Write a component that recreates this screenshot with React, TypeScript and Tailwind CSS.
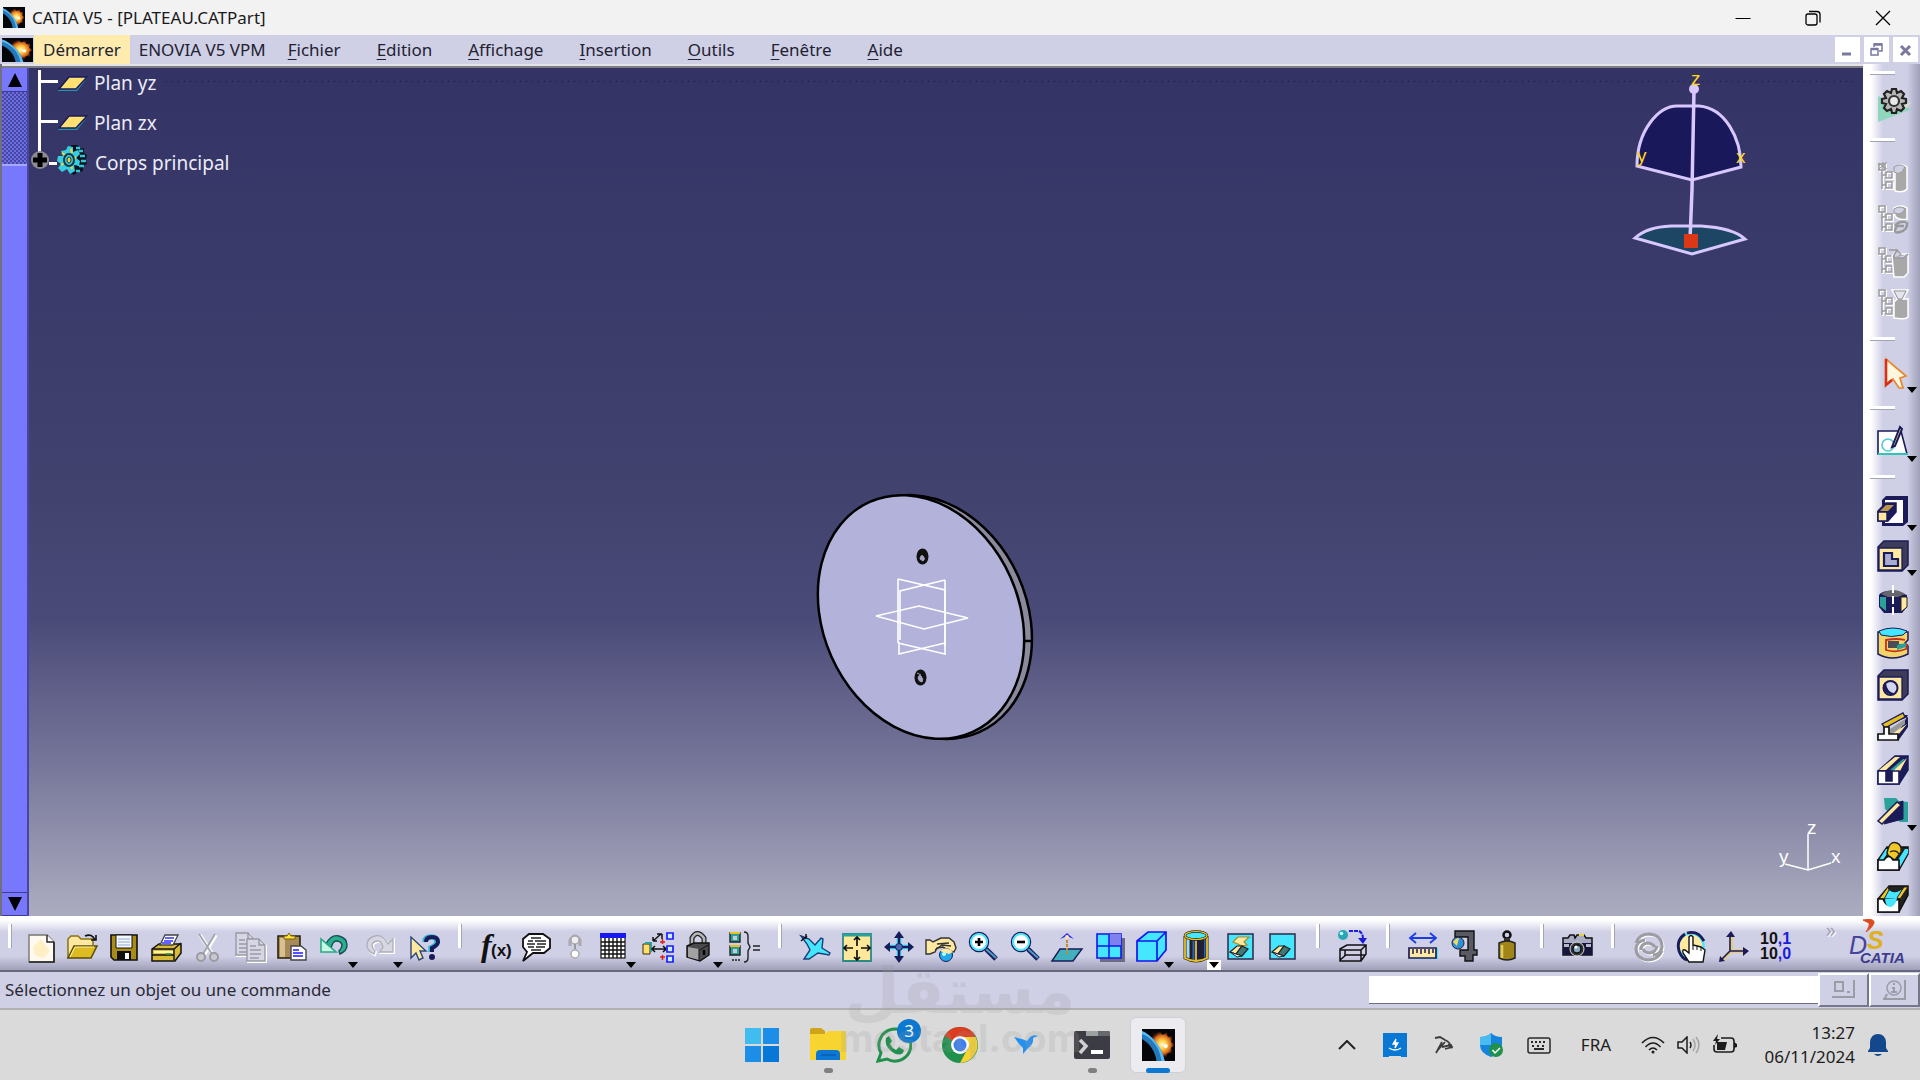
import React from 'react';

interface Tool {
  name: string;
  icon: React.ReactNode;
  menu?: boolean;
  active?: boolean;
  narrow?: boolean;
  disabled?: boolean;
}

const NAVY = '#1b1b5a';
const CREAM = '#ffe9a0';
const CYAN = '#45e6ff';
const TEAL = '#2aa19a';

/* Shared pieces */

function Icon({ children, className = 'w-8 h-8' }: { children: React.ReactNode; className?: string }) {
  return (
    <svg viewBox="0 0 32 32" className={`${className} shrink-0 overflow-visible`} fill="none" aria-hidden="true">
      {children}
    </svg>
  );
}

function Earth({ className, id }: { className: string; id: string }) {
  return (
    <svg viewBox="0 0 32 32" preserveAspectRatio="none" className={className} aria-hidden="true">
      <defs>
        <radialGradient id={id}>
          <stop offset="0" stopColor="#fffbd0" />
          <stop offset="0.35" stopColor="#ffc940" />
          <stop offset="0.7" stopColor="#d5641c" />
          <stop offset="1" stopColor="#5a1408" stopOpacity="0.2" />
        </radialGradient>
      </defs>
      <rect width="32" height="32" fill="#05060a" />
      <path d="M17 2l3 4 4-3 1 5 5-1-2 6 4 3-4 3 2 6-5-1-2 5-4-3-4-4-5-8-3-5 3-2-1-4 4 1z" fill={`url(#${id})`} />
      <path d="M0 2C9 6 19 17 22 32h-8C13 22 7 14 0 10z" fill="#2478bc" />
      <path d="M0 2C9 6 19 17 22 32h-3C17 18 9 8 0 5z" fill="#58bcf4" />
      <circle cx="23" cy="17" r="2" fill="#fff" />
    </svg>
  );
}

const treeBase = (
  <g>
    <path d="M2 2h6v6H2zM5 8v19M5 13h4M5 23h4M9 10h6v6H9zM9 20h6v6H9z" stroke="#fff" strokeWidth="2" transform="translate(1 1)" />
    <path d="M2 2h6v6H2zM5 8v19M5 13h4M5 23h4M9 10h6v6H9zM9 20h6v6H9z" stroke="#9a9a9a" strokeWidth="1.5" />
  </g>
);

const sheet = (x: number, y: number) => (
  <g>
    <path d={`M${x} ${y}h12l6 6v16h-18z`} stroke="#fff" strokeWidth="2" transform="translate(1 1)" />
    <path d={`M${x} ${y}h12l6 6v16h-18zM${x + 12} ${y}v6h6M${x + 3} ${y + 7}h6M${x + 3} ${y + 11}h11M${x + 3} ${y + 15}h11M${x + 3} ${y + 19}h9`} stroke="#9a9aa2" strokeWidth="1.4" fill="#d6d6e6" />
  </g>
);

const blockView = (hidden: boolean) => (
  <g>
    <rect x="3" y="4" width="25" height="25" fill={CYAN} stroke="#333352" strokeWidth="1.6" />
    {hidden && <path d="M8 12l5-5h11l-5 5 3 3-5 1-4-2z" fill={CREAM} stroke="#a88a20" strokeWidth="1.2" />}
    <path d="M5 22l7-6h5l-6 8z" fill={CREAM} stroke="#222" strokeWidth="1.2" />
    <path d="M11 24l6-8 6 3-6 7z" fill="#407a78" stroke="#222" strokeWidth="1.2" />
    <path d="M5 22l6 2 6 2-5 1z" fill="#fff" stroke="#222" />
  </g>
);

const magnifier = (plus: boolean) => (
  <g>
    <path d="M19 19l10 10" stroke={NAVY} strokeWidth="5" />
    <path d="M19 19l10 9" stroke="#4a9fc8" strokeWidth="2" />
    <circle cx="12" cy="12" r="9.5" fill="#fff" stroke={NAVY} strokeWidth="1.5" />
    <circle cx="12" cy="12" r="8" stroke={CYAN} strokeWidth="2" />
    <path d={plus ? 'M8 12h8M12 8v8' : 'M8 12h8'} stroke="#000" strokeWidth="2.6" />
  </g>
);

/* Bottom toolbar */

const standardTools: Tool[] = [
  { name: 'Nouveau', icon: <><path d="M4 5h18l7 7v20H4z" fill="#fffaf0" stroke="#77776f" strokeWidth="1.4" /><path d="M22 5v7h7" fill="#fff" stroke="#222" strokeWidth="1.4" /><path d="M29 12v20H4" stroke="#222" strokeWidth="1.6" /><path d="M8 17l4-4 4-4 4 6 5 6-7 7-8-3z" fill="#ffefc4" /></> },
  { name: 'Ouvrir', icon: <><path d="M1 28V9l3-3h7l3 3h12v6" fill={CREAM} stroke="#8a7210" strokeWidth="1.5" /><path d="M1 28l6-12h23l-6 12z" fill="#dcbc22" stroke="#5a4a08" strokeWidth="1.5" /><path d="M3 27l5-10h19" stroke="#fff0a0" /><path d="M18 6q7-3 10 4M29 5v5h-5" stroke="#111" strokeWidth="1.6" /></> },
  { name: 'Enregistrer', icon: <><path d="M2 5h26v25H5l-3-3z" fill="#a98c17" stroke="#111" strokeWidth="1.6" /><path d="M7 5h16v13H7z" fill="#f4f8ff" stroke="#111" /><path d="M9 9h12M9 12h12M9 15h12" stroke="#8fa8d8" /><path d="M8 21h14v9H8z" fill="#111" /><path d="M16 23h4v6h-4z" fill="#fff" /></> },
  { name: 'Imprimer', icon: <><path d="M1 19l7-5h22v9l-6 8H1z" fill="#d8bc38" stroke="#111" strokeWidth="1.5" /><path d="M1 19h22l7-6M1 25h22v5M23 19v7" stroke="#111" strokeWidth="1.4" /><path d="M3 21h19v2H3z" fill="#fff4c0" /><path d="M9 15l5-10h13l-5 10z" fill="#fff" stroke="#444" strokeWidth="1.3" /><path d="M14 8h9M13 11h9M11 13h9" stroke="#3030ff" strokeWidth="1.3" /><path d="M15 24h5" stroke="#2c9a3a" strokeWidth="1.6" /></> },
  { name: 'Couper', disabled: true, icon: <><path d="M6 4l13 20M22 4L10 24" stroke="#fff" strokeWidth="3.5" transform="translate(1 1)" /><path d="M6 4l13 20M22 4L10 24" stroke="#a3a3ab" strokeWidth="1.8" /><circle cx="8" cy="27" r="4" fill="#c9c9d2" stroke="#9a9aa0" strokeWidth="2" /><circle cx="21" cy="27" r="4" fill="#c9c9d2" stroke="#9a9aa0" strokeWidth="2" /></> },
  { name: 'Copier', disabled: true, icon: <>{sheet(1, 3)}{sheet(12, 9)}</> },
  { name: 'Coller', icon: <><path d="M1 6h22v22H1z" fill="#a88a58" stroke="#2a2208" strokeWidth="1.6" /><path d="M3 8h5v19H3z" fill="#d8c090" /><path d="M7 9V6h3l2-3 2 3h4v3z" fill="#ffe33a" stroke="#7a6208" /><path d="M14 16h10l5 4v10H14z" fill="#fff" stroke="#444" strokeWidth="1.4" /><path d="M16 20h6M16 23h10M16 26h10" stroke="#1c1cff" strokeWidth="1.6" /></> },
  { name: 'Annuler', menu: true, icon: <><path d="M7 14Q12 4 20 6q8 2 8 9 0 6-7 9l-1-3q3-3 3-6-1-4-6-4-3 0-5 7z" fill="#28b08c" stroke="#1a4a58" strokeWidth="1.4" /><path d="M2 9v13h15z" fill="#c8f8e4" stroke="#28a888" strokeWidth="1.6" /></> },
  { name: 'Rétablir', menu: true, disabled: true, icon: <><path d="M24 14Q19 4 11 6q-8 2-8 9 0 6 7 9l1-3q-3-3-3-6 1-4 6-4 3 0 5 6l-3 5h13V9z" fill="#d6d6e4" stroke="#fff" strokeWidth="2" transform="translate(1 1)" /><path d="M24 14Q19 4 11 6q-8 2-8 9 0 6 7 9l1-3q-3-3-3-6 1-4 6-4 3 0 5 6l-3 5h13V9z" fill="#d6d6e4" stroke="#aeaeb6" strokeWidth="1.3" /></> },
  { name: "Qu'est-ce que c'est ?", icon: <><path d="M2 7v21l5-5 3 7 4-2-3-7h6z" fill={CREAM} stroke="#28487c" strokeWidth="1.4" /><path d="M17 12q0-5 6-5t6 5q0 3-6 6v4" stroke="#2fb7d4" strokeWidth="5.5" transform="translate(-1 0)" /><path d="M17 12q0-5 6-5t6 5q0 3-6 6v4" stroke={NAVY} strokeWidth="4" /><circle cx="23" cy="27" r="3" fill={NAVY} /></> },
];

const knowledgeTools: Tool[] = [
  { name: 'Formule', icon: <g fill="#111"><text x="2" y="26" fontFamily="Liberation Serif, serif" fontStyle="italic" fontWeight="bold" fontSize="32">f</text><text x="12" y="26" fontFamily="Liberation Sans, sans-serif" fontWeight="bold" fontSize="17">(x)</text></g> },
  { name: 'Commentaire', icon: <><path d="M8 4h14l7 5v9l-6 5H12L2 31l4-9-4-5V9z" fill="#fff" stroke="#111" strokeWidth="1.8" /><path d="M10 8h10M7 11h5M14 11h11M6 14h8M16 14h9M7 17h6M15 17h9M10 20h10" stroke="#222" strokeWidth="1.3" /></> },
  { name: 'Lien', narrow: true, disabled: true, icon: <><path d="M11 16V10q5-8 10 0v6" stroke="#a8a8b2" strokeWidth="3" /><circle cx="16" cy="10" r="4" fill="#eee" stroke="#aaa" strokeWidth="1.5" /><path d="M16 14v5" stroke="#999" strokeWidth="2" /><circle cx="16" cy="24" r="4" fill="#fff" stroke="#aaa" strokeWidth="1.5" /></> },
  { name: 'Table de paramétrage', menu: true, icon: <><rect x="4" y="4" width="24" height="24" fill="#fff" stroke="#111" strokeWidth="1.2" /><path d="M4 12h24M4 16h24M4 20h24M4 24h24M8 8v20M12 8v20M16 8v20M20 8v20M24 8v20" stroke="#111" strokeWidth="1.4" /><path d="M3 3h26v5H3z" fill="#1818f0" /></> },
  { name: 'Relations', icon: <><path d="M1 14h7v10H1z" fill="#ffdf6a" stroke="#3a2c08" /><path d="M3 13h6v9" stroke={TEAL} strokeWidth="2" /><path d="M11 19h12M11 11l8-7M20 4h-5M20 4v5M11 11V7M11 11h4M13 16l-3 3 3 3M21 16l3 3-3 3" stroke="#111" strokeWidth="1.5" /><path d="M25 3h6v6h-6zM25 16h6v6h-6zM25 26h6v6h-6z" fill="#c9f0ff" stroke="#1c1cff" strokeWidth="1.7" /><path d="M18 12h5M20.5 9v5M18 27h5M20.5 25v5" stroke="#e02020" strokeWidth="1.5" /></> },
  { name: 'Verrouiller', menu: true, icon: <><path d="M8 15V8q5-9 12 0v8" stroke="#222" strokeWidth="5" /><path d="M8 15V8q5-9 12 0v8" stroke="#b8b8b8" strokeWidth="2.5" /><path d="M3 16l7-3h15v12l-9 6-13-4z" fill="#4a4a4c" stroke="#111" strokeWidth="1.4" /><path d="M4 17l11 2v11L4 27z" fill="#a2a2a2" /><path d="M15 19v11M16 20l8-5" stroke="#111" /><path d="M20 20v5" stroke="#000" strokeWidth="2.5" /></> },
  { name: 'Équivalences', icon: <><path d="M1 3h10v9H1zM1 16h10v9H1z" fill={TEAL} stroke="#222" strokeWidth="1.4" /><path d="M1 3h10M1 16h10" stroke="#e8c020" strokeWidth="2" /><path d="M4 6h4v4H4zM4 19h4v4H4z" fill="#c8c8d8" /><path d="M3 30h2M6 30h2M9 30h2" stroke="#222" strokeWidth="1.5" /><path d="M15 2q4 0 4 4v7l2 4-2 4v7q0 4-4 4" stroke="#222" strokeWidth="1.4" /><path d="M24 16h7M24 20h7" stroke="#222" strokeWidth="1.6" /></> },
];

const viewTools: Tool[] = [
  { name: 'Mode vol', icon: <><path d="M2 6l8 3 6 6 6-7 2 1-1 9 8 5-1 2-11-2-9 6H5l6-9-3-6z" fill={CYAN} stroke="#1c3c78" strokeWidth="1.4" /><path d="M2 11l6-5M7 4v5" stroke="#111" strokeWidth="1.5" /></> },
  { name: 'Centrer tout', icon: <><path d="M2 4h28v27H2z" fill="#ffe89a" stroke="#2a8a86" strokeWidth="1.8" /><path d="M2 5h28" stroke={TEAL} strokeWidth="3" /><path d="M16 8v8M16 20v9M4 18h8M20 18h8M13 10l3-3 3 3M13 27l3 3 3-3M6 15l-3 3 3 3M26 15l3 3-3 3" stroke="#111" strokeWidth="1.7" /></> },
  { name: 'Translater', icon: <><path d="M16 4v26M3 17h26" stroke={CYAN} strokeWidth="5" /><path d="M16 4v26M3 17h26" stroke={NAVY} strokeWidth="2.5" /><path d="M11 8l5-7 5 7zM11 26l5 7 5-7zM7 12l-6 5 6 5zM25 12l6 5-6 5z" fill={NAVY} /><circle cx="16" cy="17" r="3.5" fill="#4868b0" stroke={NAVY} /></> },
  { name: 'Rotation', icon: <><path d="M1 10h4l3 2 8-4h8l5 4 2 6-2 4-4-1-7-4-6 1-2 4-5 2H1z" fill={CREAM} stroke="#333" strokeWidth="1.4" /><path d="M12 14l12-1M10 20l7-5 9 1" stroke="#333" strokeWidth="1.3" /><circle cx="21" cy="25" r="6.5" fill="#22a8e8" stroke={NAVY} /><path d="M15 21q6-6 13 1l-4 2z" fill={CREAM} /><circle cx="19" cy="24" r="2" fill="#bff" /></> },
  { name: 'Zoom avant', icon: magnifier(true) },
  { name: 'Zoom arrière', icon: magnifier(false) },
  { name: 'Vue normale', icon: <><path d="M1 31l8-12h22l-9 12z" fill="#3fb0bc" stroke={NAVY} strokeWidth="1.4" /><path d="M16 6v18" stroke="#c88a30" strokeWidth="2" strokeDasharray="3 1" /><path d="M9 9l7-6 7 6-5-2h-4z" fill="#2a2aff" /><circle cx="16" cy="7" r="2" fill={CREAM} /></> },
  { name: 'Multi-vues', icon: <><path d="M7 8h25v24H7z" fill="#6c6c84" /><path d="M4 4h24v24H4z" fill={CYAN} stroke="#1414f0" strokeWidth="1.6" /><path d="M16 4h12v12H16z" fill="#7d80ee" /><path d="M16 4v24M4 16h24" stroke="#1414f0" strokeWidth="1.5" /></> },
  { name: 'Vue isométrique', menu: true, icon: <path d="M2 11L13 2h18v18l-9 11H2zM2 11h20v20M22 11l9-9" fill={CYAN} stroke="#1414f0" strokeWidth="1.7" /> },
  { name: 'Ombrage avec arêtes', menu: true, active: true, icon: <><path d="M5 6v22q11 6 22 0V6z" fill="#2b60c8" /><path d="M5 6h6v23l-6-2z" fill="#9edcf4" /><path d="M17 9h7v20h-7z" fill={NAVY} /><path d="M5 6v22q11 6 22 0V6M16 8v22M11 9v20M22 9v20" stroke="#222" strokeWidth="3" /><path d="M5 6v22q11 6 22 0V6M12 9h8M16 8v22" stroke="#e8c020" strokeWidth="1.8" /><ellipse cx="16" cy="5.5" rx="11" ry="4" fill={CYAN} stroke="#222" strokeWidth="2.4" /><ellipse cx="16" cy="5.5" rx="11" ry="4" stroke="#e8c020" strokeWidth="1.2" /></> },
  { name: 'Cacher / Afficher', icon: blockView(true) },
  { name: "Permuter l'espace visible", icon: blockView(false) },
];

const materialTools: Tool[] = [
  { name: 'Appliquer un matériau', icon: <><circle cx="6" cy="5" r="5" fill="#29a6b4" /><circle cx="4.5" cy="3.5" r="1.8" fill="#bff" /><path d="M12 1h10q4 2 4 8" stroke="#1c1cdc" strokeWidth="2" strokeDasharray="4 1" /><path d="M21 8h9l-4 6z" fill="#1c1cdc" /><path d="M3 19l7-4h19v9l-5 7H3zM3 20h21v11M24 20l5-5M8 20v5h12M3 30l6-5h19" stroke="#111" strokeWidth="1.5" /></> },
];

const measureTools: Tool[] = [
  { name: 'Mesurer entre', icon: <><path d="M3 8h26M9 3L3 8l6 5M23 3l6 5-6 5" stroke="#1c3ce8" strokeWidth="1.8" /><path d="M3 18h28v11H3z" fill={CYAN} /><path d="M2 18h27v10H2z" fill={CREAM} stroke={NAVY} strokeWidth="1.7" /><path d="M6 19v5M10 19v4M14 19v5M18 19v4M22 19v5M26 19v4" stroke={NAVY} strokeWidth="1.5" /></> },
  { name: 'Mesurer un élément', icon: <><path d="M6 1h19v19h3v5h-4v6h-8v-5h-5v-6h8V7H6z" fill="#5a5a62" stroke="#111" strokeWidth="1.4" /><circle cx="9" cy="13" r="6" fill="#2a90d8" stroke="#223" /><path d="M4 12q3-4 6-4l-2 8z" fill="#f4d868" /></> },
  { name: "Mesurer l'inertie", icon: <><circle cx="16" cy="5" r="3.5" stroke="#111" strokeWidth="2.5" /><path d="M13 8h6v4h-6z" fill="#333" /><path d="M8 13q8-4 16 0v15q-8 4-16 0z" fill="#a08618" stroke="#222" strokeWidth="1.5" /><path d="M11 15v13" stroke="#e0cc60" strokeWidth="2.5" /></> },
];

const captureTools: Tool[] = [
  { name: 'Capture', icon: <><path d="M2 8h5l2-3h4l1 3 2-3h7l2 3h6v17H2z" fill="#a8acc4" stroke="#111" strokeWidth="1.5" /><path d="M2 13h29v12H2z" fill="#16163c" /><path d="M3 14h5v3H3zM25 14h5v3h-5z" fill="#b8b8c8" /><path d="M18 4h5v2h-5z" fill="#e8d040" /><circle cx="16" cy="19" r="7" fill="#333" stroke="#ddd" /><circle cx="16" cy="19" r="4" fill="#86a8c0" stroke="#111" strokeWidth="1.5" /><circle cx="15" cy="17" r="1.5" fill="#fff" /></> },
];

const swirl = 'M3 13Q6 4 16 4q13 1 13 13-1 8-9 8M29 21q-4 9-14 9Q3 29 3 18q1-7 9-8M8 20q0-6 6-7 5 0 8 4M24 16q-1 6-7 7-5 0-7-4';

const updateTools: Tool[] = [
  { name: 'Mise à jour', disabled: true, icon: <><path d={swirl} stroke="#fff" strokeWidth="3" transform="translate(1 1)" /><path d={swirl} stroke="#9c9ca2" strokeWidth="3" /></> },
  { name: 'Mise à jour manuelle', icon: <><circle cx="16" cy="16" r="12.5" fill={CREAM} stroke={CYAN} strokeWidth="2.5" /><path d="M10 4Q1 10 4 21q3 8 8 9M12 3q11-3 17 8" stroke={NAVY} strokeWidth="2.8" /><path d="M14 32l-6-9q-1-4 2-3l4 3V7q2-3 4 0v8l8 2 4 3-2 12z" fill="#fff" stroke="#111" strokeWidth="1.4" /><path d="M18 15v5M22 16v4M26 17v4" stroke="#111" /></> },
  { name: 'Système d’axes', icon: <><path d="M14 4v17l16 0M14 21L4 31" stroke="#e8cc70" strokeWidth="3.5" /><path d="M13 4v17h16M13 21L4 30" stroke={NAVY} strokeWidth="1.6" /><path d="M9 7l5-6 4 6zM26 17l6 4-6 5zM3 26l5 5-6 1z" fill={NAVY} /></> },
  { name: 'Dimensions moyennes', icon: <g fontFamily="Liberation Sans, sans-serif" fontWeight="bold" fontSize="16"><text x="1" y="14" fill="#111">10<tspan fill="#1c1cdc">,1</tspan></text><text x="1" y="29" fill="#111">10<tspan fill="#1c1cdc">,0</tspan></text></g> },
];

/* Side toolbar */

const workbenchTools: Tool[] = [
  { name: 'Part Design', icon: <><path d="M1 10v26l34-13z" fill="#8ed6bc" /><path d="M20 20l15-4-8 8z" fill="#d8d8d0" /><path d="M15 3h4l1 4 4-2 3 3-2 4 4 1v4l-4 1 2 4-3 3-4-2-1 4h-4l-1-4-4 2-3-3 2-4-4-1v-4l4-1-2-4 3-3 4 2z" fill="#b8b8b8" stroke="#222" strokeWidth="2.2" /><circle cx="17" cy="15" r="5" fill="#e8e8e8" stroke="#333" strokeWidth="2.2" /></> },
];

const treeTools: Tool[] = [
  { name: 'Insérer un corps', disabled: true, icon: <>{treeBase}<path d="M18 5q6-4 12 0v22q-3 4-12 2z" fill="#a8a8a8" stroke="#fff" strokeWidth="1.5" /><path d="M17 5q6-4 11 0l-3 5q-4 3-8 0z" fill="#cfcfe6" stroke="#999" /><path d="M6 0v7M1 1l9 6M10 0L2 7" stroke="#999" /></> },
  { name: 'Actualiser un corps', disabled: true, icon: <>{treeBase}<path d="M17 4q7-4 13 0v11q-8 2-12-3z" fill="#a8a8a8" stroke="#fff" strokeWidth="1.5" /><path d="M17 5q6-4 11 0l-3 4q-4 2-8 0z" fill="#cfcfe6" stroke="#999" /><path d="M18 22q3-5 11-4M30 18q1 8-7 10t-3-6h7" stroke="#999" strokeWidth="2.5" /></> },
  { name: 'Assembler', disabled: true, icon: <>{treeBase}<path d="M15 10l5-6 5 4h6v19l-4 4H17z" fill="#a8a8a8" stroke="#fff" strokeWidth="1.5" /><path d="M17 12h10l4-4M17 12v-3l3-5 4 4M12 4h9" fill="#cfcfe6" stroke="#999" strokeWidth="1.5" /></> },
  { name: 'Relimitation partielle', disabled: true, icon: <>{treeBase}<path d="M15 2h16l-5 9h5v18q-3 3-14 1V14l3-3z" fill="#a8a8a8" stroke="#fff" strokeWidth="1.5" /><path d="M17 3h12l-4 8h-4z" fill="#e4e4f0" stroke="#999" /></> },
];

const selectTools: Tool[] = [
  { name: 'Sélectionner', menu: true, icon: <><path d="M9 2v26l7-6 6 9h4l-3-10 6-2z" fill="#fff6e0" stroke="#e8862c" strokeWidth="1.7" /><path d="M9 2v26l6-5" stroke="#d83010" strokeWidth="2.6" /></> },
];

const sketchTools: Tool[] = [
  { name: 'Esquisse', menu: true, icon: <><path d="M1 5h23l6 23H1z" fill="#fff" stroke={NAVY} strokeWidth="1.6" /><path d="M1 28h30" stroke="#30c4b8" strokeWidth="2" /><circle cx="11" cy="19" r="6" stroke="#58c8d8" strokeWidth="1.7" /><path d="M15 21l8-20 2 2-7 17z" fill={CREAM} stroke={NAVY} strokeWidth="2" /></> },
];

const featureTools: Tool[] = [
  { name: 'Extrusion', menu: true, icon: <><path d="M5 5l4-4h22v26l-5 4H5z" fill={NAVY} /><path d="M8 5h18v23H8z" fill="#fff" /><path d="M1 16l8-8h10v9l-8 9H1z" fill={NAVY} stroke={NAVY} strokeWidth="1.5" /><path d="M3 16l6-6h8l-6 6z" fill="#b89848" /><path d="M1 17h9v9H1z" fill={CREAM} stroke={NAVY} strokeWidth="1.5" /></> },
  { name: 'Poche', menu: true, icon: <><path d="M1 7l6-6h24v24l-6 6H1z" fill="#3c3c58" stroke={NAVY} strokeWidth="1.5" /><path d="M2 8h23v22H2z" fill={CREAM} stroke={NAVY} strokeWidth="1.3" /><path d="M7 13h8v6h6v7H7z" fill="#a8acd0" stroke={NAVY} strokeWidth="2.2" /></> },
  { name: 'Révolution', icon: <><path d="M2 10q6-8 28 0v12l-5 6H7l-5-6z" fill={NAVY} /><path d="M4 9q12-8 24 0l-7 3H11z" fill="#66666e" /><path d="M3 12h6v14l-6-5z" fill={TEAL} /><path d="M24 12h6v10l-6 5z" fill={CREAM} stroke="#222" /><path d="M16 0v30" stroke="#fff" strokeWidth="2" strokeDasharray="8 3" /></> },
  { name: 'Gorge', icon: <><path d="M1 5v22q14 8 30 0v-8l-3-3 3-3V5z" fill="#f2d468" stroke={NAVY} strokeWidth="1.5" /><path d="M28 13q-8-2-19 0v10q10 3 20-1l1-4H20" stroke="#c43020" strokeWidth="1.8" /><path d="M11 14h11v7H11z" fill="#4c4c54" /><path d="M20 18l9-2v4l-9 3z" fill={TEAL} /><path d="M2 4q14-6 28 0l-4 4q-12 3-22 0z" fill={CYAN} stroke={NAVY} /></> },
  { name: 'Trou', icon: <><path d="M1 7l6-6h24v24l-6 6H1z" fill="#3c3c58" stroke={NAVY} strokeWidth="1.5" /><path d="M2 8h23v22H2z" fill={CREAM} stroke={NAVY} strokeWidth="1.3" /><circle cx="13.5" cy="19" r="7" fill="#d4d6f0" stroke={NAVY} strokeWidth="2" /><path d="M8 14q-3 9 8 11-7-2-8-11z" fill={NAVY} stroke={NAVY} strokeWidth="2" /></> },
  { name: 'Nervure', icon: <><path d="M6 16l18-12h7L21 22V30l10-14V6" fill={NAVY} /><path d="M5 13L26 2l2 4-20 11z" fill="#e4c020" stroke={NAVY} strokeWidth="1.3" /><path d="M10 20L28 8v5L14 24z" fill="#989898" /><path d="M14 24l16-11-9 11z" fill={CREAM} /><path d="M1 23h6v-7h5v7h9v6H1z" fill="#fff" stroke="#111" strokeWidth="1.7" /></> },
  { name: 'Rainure', icon: <><path d="M1 18L18 3h13v14L22 31H1z" fill={NAVY} stroke={NAVY} strokeWidth="1.5" /><path d="M2 17L18 4h5L9 17z" fill={CREAM} /><path d="M13 17L26 6h2L17 18z" fill={TEAL} /><path d="M16 18L30 5l-7 13z" fill={CREAM} /><path d="M1 18h8v10h6V18h7v13H1z" fill="#fff" stroke={NAVY} strokeWidth="1.6" /></> },
  { name: 'Raidisseur', menu: true, icon: <><path d="M7 3h12l3 3 9 1v20h-8L8 14z" fill={TEAL} /><path d="M20 8l6-2v18L7 29z" fill={NAVY} stroke={NAVY} /><path d="M1 26L20 7l4 3L5 29z" fill={CREAM} stroke={NAVY} strokeWidth="1.5" /></> },
  { name: 'Solide multi-sections', icon: <><path d="M1 20L10 7h21v7L22 30H1z" fill="#222" stroke="#111" strokeWidth="1.5" /><path d="M2 20L9 9h4L6 20zM21 20l7-11h3v4l-8 14z" fill={CYAN} /><path d="M11 9q2-8 9-6 5 2 4 9l-6 8q-7-3-8-7z" fill="#f0c828" stroke="#222" strokeWidth="1.5" /><path d="M13 12q6-3 9 2" stroke="#222" strokeWidth="1.3" /><path d="M1 20h6q5-7 9 0l6 0v10H1z" fill="#fff" stroke="#111" strokeWidth="1.6" /></> },
  { name: 'Solide multi-sections soustrait', icon: <><path d="M1 17L12 4h19v9L22 30H1z" fill="#222" stroke="#111" strokeWidth="1.5" /><path d="M11 6q6 7 15 0l-4 11H5z" fill={CYAN} stroke="#222" strokeWidth="1.3" /><path d="M2 17L11 5l1 3-5 9zM20 16l7-11h4l-8 12z" fill="#f0c828" stroke="#222" /><path d="M1 17h5q5 12 13 1l3-1v13H1z" fill="#fff" stroke="#111" strokeWidth="1.6" /><path d="M8 17q1 9 6 8 5-2 6-9z" fill={CYAN} /></> },
];

function ToolButton({ tool, vertical = false }: { tool: Tool; vertical?: boolean }) {
  let size = 'w-[42px] h-10';
  if (vertical) size = tool.menu ? 'w-10 h-[45px]' : 'w-10 h-[42px]';
  else if (tool.menu) size = 'w-[45px] h-10';
  else if (tool.narrow) size = 'w-[34px] h-10';

  return (
    <button
      type="button"
      aria-label={tool.name}
      disabled={tool.disabled}
      className={`${size} relative shrink-0 flex items-start ${vertical ? 'pt-[5px] pl-[7px]' : tool.narrow ? 'pl-px' : 'pl-[5px]'}`}
    >
      <Icon>{tool.icon}</Icon>
      {tool.menu && (
        <svg
          viewBox="0 0 14 10"
          aria-hidden="true"
          className={`absolute w-[14px] h-[10px] ${vertical ? 'left-[35px] bottom-0.5' : '-right-px bottom-0'} ${tool.active ? 'bg-white' : ''}`}
        >
          <path d="M2 2h10L7 8z" fill="#000" />
        </svg>
      )}
    </button>
  );
}

function Grip({ className = 'w-7' }: { className?: string }) {
  return (
    <div className={`${className} h-10 shrink-0 flex justify-center`}>
      <div className="w-1 h-6 -mt-1.5 bg-white border-r border-[#a4a4b4]" />
    </div>
  );
}

function SideGrip({ className = 'h-7' }: { className?: string }) {
  return (
    <div className={`${className} shrink-0 flex items-center`}>
      <div className="w-[25px] h-1 bg-white border-b border-[#a4a4b4]" />
    </div>
  );
}

function ToolGroup({ tools, label }: { tools: Tool[]; label: string }) {
  return (
    <div role="group" aria-label={label} className="flex shrink-0">
      {tools.map((tool) => (
        <ToolButton key={tool.name} tool={tool} />
      ))}
    </div>
  );
}

function SideGroup({ tools, label }: { tools: Tool[]; label: string }) {
  return (
    <div role="group" aria-label={label} className="flex flex-col shrink-0">
      {tools.map((tool) => (
        <ToolButton key={tool.name} tool={tool} vertical />
      ))}
    </div>
  );
}

/* Window frame */

function TitleBar() {
  return (
    <header className="h-[35px] shrink-0 flex items-center bg-[#f2f2f2] pl-[3px]">
      <Earth id="earth-title" className="w-[22px] h-[21px]" />
      <h1 className="pl-[7px] text-[17px] leading-6 text-[#1a1a1a]">CATIA V5 - [PLATEAU.CATPart]</h1>
      <div className="ml-auto flex pr-0.5">
        <button type="button" aria-label="Réduire" className="w-[70px] h-[35px] flex items-center justify-center">
          <svg viewBox="0 0 16 16" className="w-4 h-4" stroke="#000"><path d="M0.5 8.5h15" /></svg>
        </button>
        <button type="button" aria-label="Restaurer" className="w-[70px] h-[35px] flex items-center justify-center">
          <svg viewBox="0 0 16 16" className="w-4 h-4" stroke="#000" strokeWidth="1.3" fill="none">
            <rect x="1" y="4" width="11" height="11" rx="2" />
            <path d="M4 1.5h8q3 0 3 3v8" />
          </svg>
        </button>
        <button type="button" aria-label="Fermer" className="w-[70px] h-[35px] flex items-center justify-center">
          <svg viewBox="0 0 16 16" className="w-4 h-4" stroke="#000" strokeWidth="1.3"><path d="M1 1l14 14M15 1L1 15" /></svg>
        </button>
      </div>
    </header>
  );
}

const menus = ['Fichier', 'Edition', 'Affichage', 'Insertion', 'Outils', 'Fenêtre', 'Aide'];

function MenuBar() {
  return (
    <nav aria-label="Menu principal" className="h-[29px] shrink-0 flex items-center bg-[#cfcfe6] px-0.5 text-[17px] text-[#222230]">
      <Earth id="earth-menu" className="w-[31px] h-6" />
      <button type="button" className="ml-px h-[29px] px-[9px] bg-[#ffebae]">Démarrer</button>
      <button type="button" className="pl-[9px] pr-1">ENOVIA V5 VPM</button>
      {menus.map((menu) => (
        <button key={menu} type="button" className="px-[18px]">
          <span className="underline underline-offset-3">{menu[0]}</span>{menu.slice(1)}
        </button>
      ))}
      <div className="ml-auto flex gap-1">
        <button type="button" aria-label="Réduire le document" className="w-[25px] h-[25px] bg-white">
          <svg viewBox="0 0 25 25"><path d="M7 17h9" stroke="#7878a0" strokeWidth="3" /></svg>
        </button>
        <button type="button" aria-label="Restaurer le document" className="w-[25px] h-[25px] bg-white">
          <svg viewBox="0 0 25 25" fill="none" stroke="#7878a0" strokeWidth="1.5"><path d="M7 12h7v6H7zM10 10V7h8v7h-3" /><path d="M7 12h7M10 7.5h8" strokeWidth="2.5" /></svg>
        </button>
        <button type="button" aria-label="Fermer le document" className="w-[25px] h-[25px] bg-white">
          <svg viewBox="0 0 25 25"><path d="M8 9l9 9M17 9l-9 9" stroke="#7878a0" strokeWidth="3" /></svg>
        </button>
      </div>
    </nav>
  );
}

function TreeScroll() {
  return (
    <div className="w-[27px] shrink-0 flex flex-col bg-[#7878ff] border-r-2 border-[#4646a0]">
      <button type="button" aria-label="Défiler vers le haut" className="h-6 flex items-center justify-center border-b border-[#3c3c90]">
        <svg viewBox="0 0 14 14" className="w-[14px] h-[14px]"><path d="M7 0l7 14H0z" /></svg>
      </button>
      <div className="h-[74px] shrink-0 bg-[#5c5cc4] bg-[repeating-conic-gradient(#6c6ce4_0_25%,#4848a0_0_50%)] bg-size-[4px_4px] border-b-2 border-[#a8a8ff]" />
      <div className="flex-1" />
      <button type="button" aria-label="Défiler vers le bas" className="h-6 flex items-center justify-center border-y border-[#3c3c90]">
        <svg viewBox="0 0 14 14" className="w-[14px] h-[14px]"><path d="M0 0h14L7 14z" /></svg>
      </button>
    </div>
  );
}

function PlaneIcon() {
  return (
    <svg viewBox="0 0 30 16" className="w-[30px] h-4 shrink-0" aria-hidden="true">
      <path d="M0 15h19L30 1H28L17 13H1z" fill="#2a93a8" />
      <path d="M1 13L11 1h18L18 13z" fill="#ffe070" stroke={NAVY} strokeWidth="1.5" />
    </svg>
  );
}

function BodyIcon() {
  return (
    <svg viewBox="0 0 30 30" className="w-[30px] h-[30px] shrink-0" aria-hidden="true">
      <path d="M14 0h7l1 4 5-1v5l3 2-1 4 1 5-4 2v5l-5 1-4 3-5-3z" fill="#0a1420" />
      <path d="M22 6h4M23 11h5M24 16h5M22 21h5M19 26h4M19 3h4" stroke="#35c4d4" strokeWidth="2.5" />
      <path d="M11 1l5 1 0 5 5-2 2 4-4 4 4 3-1 5-5-1 1 6-5 3-3-5-5 3-4-4 3-4-4-3 1-5 5 0-2-5 5-1z" fill="#38cde0" />
      <path d="M5 8l3 2M14 4l1 4M4 20l3-2M15 24l-1-4M19 12l-2 2" stroke="#f4d830" strokeWidth="2" />
      <ellipse cx="12" cy="15" rx="5" ry="6" fill="#38cde0" stroke="#143848" strokeWidth="2" />
      <ellipse cx="12" cy="15" rx="2" ry="3" fill="#f4d830" stroke="#143848" />
    </svg>
  );
}

function SpecTree() {
  return (
    <ul className="relative pt-0.5 pl-[9px] pr-[10px] text-[19px] text-[#ececf6]">
      <li className="h-[27px] border-l-3 border-white flex items-center gap-1.5">
        <span className="w-[17px] h-[3px] -mt-1 bg-white shrink-0" />
        <span className="-ml-1.5"><PlaneIcon /></span>
        <span>Plan yz</span>
        <span className="flex-1 h-px ml-1 -mt-1 bg-[repeating-linear-gradient(90deg,#15153c_0_1px,transparent_1px_6px)]" />
      </li>
      <li className="h-[58px] pb-1.5 border-l-3 border-white flex items-center gap-1.5">
        <span className="w-[17px] h-[3px] -mt-1 bg-white shrink-0" />
        <span className="-ml-1.5"><PlaneIcon /></span>
        <span>Plan zx</span>
      </li>
      <li className="h-4 -ml-[7px] flex items-center gap-2">
        <button type="button" aria-label="Développer Corps principal" className="shrink-0 -mt-1.5">
          <svg viewBox="0 0 18 18" className="w-[18px] h-[18px] block"><circle cx="9" cy="9" r="9" fill="#8c8c90" /><path d="M9 2v14M2 9h14" stroke="#000" strokeWidth="5" /></svg>
        </button>
        <span className="w-2 h-[3px] -ml-2 bg-white shrink-0" />
        <span className="-ml-2 -mt-1.5"><BodyIcon /></span>
        <span>Corps principal</span>
      </li>
    </ul>
  );
}

function Disk() {
  return (
    <svg viewBox="800 480 250 270" className="absolute left-[772px] top-[412px] w-[250px] h-[270px]" fill="none" role="img" aria-label="Plateau">
      <ellipse cx="927" cy="617" rx="126" ry="99" transform="rotate(66 927 617)" fill="#8a8a9c" stroke="#000" strokeWidth="2.5" />
      <ellipse cx="920" cy="617" rx="126" ry="98" transform="rotate(66 920 617)" fill="#b2b2da" stroke="#000" strokeWidth="2.5" />
      <path d="M1023 641h7" stroke="#000" strokeWidth="2.5" />
      <g fill="#111">
        <ellipse cx="921.5" cy="556.5" rx="6" ry="8" />
        <ellipse cx="919.5" cy="677.5" rx="6" ry="8" />
      </g>
      <path d="M919 559q1-5 3-3 3 3 0 5zM917 678q1-4 3-2 3 4 1 6-3 0-4-4zM916 673l4 2" fill="#a4a4c4" stroke="#a4a4c4" />
      <g stroke="#fff" strokeWidth="1.6">
        <path d="M875 616l43-10 49 12-44 11z" />
        <path d="M897 579l47 11v54M897 579v64M897 643l47 11v-12" />
        <path d="M944 580l-45 11v49M944 580v66M944 643l-46 11v-12" />
      </g>
    </svg>
  );
}

function Compass() {
  return (
    <svg viewBox="0 0 120 190" className="absolute right-[110px] top-1 w-[120px] h-[190px] overflow-visible" fill="none" role="img" aria-label="Boussole 3D">
      <path d="M4 94C4 58 26 34 44 34h22c26 2 42 32 42 61l-49 13z" fill="#18185a" />
      <path d="M4 94C4 58 26 34 44 34h22c26 2 42 32 42 61l-49 13z" stroke="#d8c8ff" strokeWidth="3" />
      <path d="M2 166q12-11 36-12h30q32 2 44 13l-53 15z" fill="#1c4664" stroke="#d8c8ff" strokeWidth="3" />
      <path d="M61 18l-1 50-1 50-2 50" stroke="#d8c8ff" strokeWidth="3.5" />
      <circle cx="61" cy="17" r="5" fill="#d8c8ff" />
      <path d="M51 162h14v14H51z" fill="#dc3818" />
      <g fill="#ffd818" fontFamily="Liberation Sans, sans-serif" fontSize="19">
        <text x="58" y="13">z</text>
        <text x="4" y="90">y</text>
        <text x="103" y="91">x</text>
      </g>
    </svg>
  );
}

function AxisTriad() {
  return (
    <svg viewBox="0 0 66 60" className="absolute right-[20px] bottom-[40px] w-[66px] h-[60px]" fill="none" aria-hidden="true">
      <path d="M31 18v35M8 48l23 6 23-7" stroke="#fff" strokeWidth="1.5" />
      <g fill="#fff" fontFamily="Liberation Sans, sans-serif" fontSize="19">
        <text x="30" y="18">z</text>
        <text x="2" y="47">y</text>
        <text x="54" y="47">x</text>
      </g>
    </svg>
  );
}

function SideToolbar() {
  return (
    <aside className="w-[57px] shrink-0 h-0 min-h-full flex flex-col pl-[7px] bg-[linear-gradient(90deg,#fff_0,#fff_8px,#cfcfe6_20px,#cfcfe6_44px,#a0a0ba_57px)]">
      <SideGrip className="h-[17px]" />
      <SideGroup tools={workbenchTools} label="Atelier" />
      <SideGrip className="h-[34px]" />
      <SideGroup tools={treeTools} label="Insertion" />
      <SideGrip className="h-[27px]" />
      <div className="h-[42px]"><SideGroup tools={selectTools} label="Sélection" /></div>
      <SideGrip className="h-[27px]" />
      <div className="h-[42px]"><SideGroup tools={sketchTools} label="Esquisse" /></div>
      <SideGrip className="h-[27px]" />
      <SideGroup tools={featureTools} label="Composants" />
    </aside>
  );
}

function BottomToolbar() {
  return (
    <div className="h-14 shrink-0 flex pt-[14px] border-b-2 border-[#68687c] bg-[linear-gradient(180deg,#fff_0,#fff_4px,#cfcfe6_16px,#cfcfe6_40px,#a0a0ba_54px)]">
      <Grip className="w-5" />
      <ToolGroup tools={standardTools} label="Standard" />
      <Grip />
      <ToolGroup tools={knowledgeTools} label="Connaissance" />
      <Grip />
      <ToolGroup tools={viewTools} label="Vue" />
      <Grip />
      <ToolGroup tools={materialTools} label="Matériau" />
      <Grip />
      <ToolGroup tools={measureTools} label="Mesure" />
      <Grip />
      <ToolGroup tools={captureTools} label="Capture" />
      <Grip className="w-[30px]" />
      <ToolGroup tools={updateTools} label="Outils" />
      <div className="ml-auto flex shrink-0 -mt-3 gap-3 pr-2.5">
        <span className="text-[20px] leading-6 text-[#a2a2b4] [text-shadow:1px_1px_#fff]">»</span>
        <svg viewBox="0 0 62 48" className="w-[62px] h-12 overflow-visible" fill="none" role="img" aria-label="DS CATIA">
          <path d="M15 2q12-2 11 3-1 4-8 9 4-6 3-9z" fill="#dc4a20" stroke="#dc4a20" />
          <text x="1" y="36" fill="#44449a" fontFamily="Liberation Sans, sans-serif" fontSize="25" fontStyle="italic">D</text>
          <text x="19" y="31" fill="#e0b020" fontFamily="Liberation Sans, sans-serif" fontSize="25" fontStyle="italic" fontWeight="bold">S</text>
          <text x="12" y="45" fill="#3c3c8c" fontFamily="Liberation Sans, sans-serif" fontSize="15" fontStyle="italic" fontWeight="bold">CATIA</text>
        </svg>
      </div>
    </div>
  );
}

function StatusBar() {
  return (
    <div className="h-[38px] shrink-0 flex items-center bg-[#cfcfe6] border-b-2 border-[#b0b0b0] pl-[5px]">
      <p role="status" className="text-[17px] text-[#2a2a34]">Sélectionnez un objet ou une commande</p>
      <input aria-label="Commande" className="ml-auto w-[449px] h-7 bg-white border-b border-[#70707c]" />
      <button type="button" aria-label="Fenêtre de commande" className="w-[51px] h-[34px] flex items-center justify-center border-2 border-t-white border-l-white border-b-[#77778a] border-r-[#77778a]">
        <svg viewBox="0 0 24 20" className="w-6 h-5" fill="none" stroke="#9c9ca6" strokeWidth="2"><path d="M3 2h8v9H3zM0 17h22V0M15 12h3" /></svg>
      </button>
      <button type="button" aria-label="Informations" className="w-[51px] h-[34px] flex items-center justify-center border-2 border-t-white border-l-white border-b-[#77778a] border-r-[#77778a]">
        <svg viewBox="0 0 24 20" className="w-6 h-5" fill="none" stroke="#9c9ca6" strokeWidth="2"><path d="M0 19h22V0" /><circle cx="11" cy="8" r="7" strokeWidth="1.5" /><path d="M11 3v2M9 8h2v4M8 12h6M4 14l-2 4" /></svg>
      </button>
    </div>
  );
}

/* Windows taskbar */

function TaskbarApp({ name, running = false, children }: { name: string; running?: boolean; children: React.ReactNode }) {
  return (
    <button type="button" aria-label={name} className="relative w-[66px] h-full flex items-center justify-center">
      {children}
      {running && <span className="absolute bottom-[7px] w-[9px] h-[5px] rounded-full bg-[#808080]" />}
    </button>
  );
}

function Taskbar() {
  return (
    <footer className="h-[70px] shrink-0 grid grid-cols-[1fr_auto_1fr] bg-[#dadada] text-[#1c1c1c]">
      <div />
      <div className="flex">
        <TaskbarApp name="Démarrer Windows">
          <svg viewBox="0 0 36 36" className="w-9 h-9">
            <path d="M1 1h16v16H1z" fill="#40bcf0" />
            <path d="M19 1h16v16H19zM1 19h16v16H1z" fill="#1c8ee8" />
            <path d="M19 19h16v16H19z" fill="#0878d8" />
          </svg>
        </TaskbarApp>
        <TaskbarApp name="Explorateur de fichiers" running>
          <svg viewBox="0 0 36 36" className="w-9 h-9">
            <path d="M0 3q0-2 2-2h9l4 3v5H0z" fill="#d0a418" />
            <path d="M0 7h15l3-3h18v29H0z" fill="#f8d430" />
            <path d="M6 33v-6q0-4 4-4h16q4 0 4 4v6z" fill="#0c78d4" />
            <path d="M11 28h15" stroke="#0a4ca0" />
          </svg>
        </TaskbarApp>
        <TaskbarApp name="WhatsApp">
          <svg viewBox="0 0 36 36" className="w-9 h-9" fill="none">
            <path d="M2 34l3-8A16 16 0 1 1 11 32z" stroke="#20904c" strokeWidth="3" />
            <path d="M10 11l3-2 3 5-2 3q2 4 6 6l3-3 5 3-1 3q-5 4-12-2T10 11z" fill="#20904c" />
          </svg>
          <span className="absolute left-[36px] top-[9px] w-6 h-6 rounded-full bg-[#0c78d0] text-white text-[17px] leading-6 text-center">3</span>
        </TaskbarApp>
        <TaskbarApp name="Google Chrome">
          <svg viewBox="0 0 36 36" className="w-9 h-9">
            <circle cx="18" cy="18" r="18" fill="#20904c" />
            <path d="M18 18L2.4 9A18 18 0 0 1 33.6 9z" fill="#dc3c20" />
            <path d="M18 10h15.6A18 18 0 0 1 18 36l7.5-14z" fill="#f8d430" />
            <circle cx="18" cy="18" r="9" fill="#fff" />
            <circle cx="18" cy="18" r="6.5" fill="#3c80f0" />
          </svg>
        </TaskbarApp>
        <TaskbarApp name="Colibri">
          <svg viewBox="0 0 24 20" className="w-6 h-5">
            <path d="M0 2l8 2 5 2 3-4q4-3 8-1l-5 2q1 6-5 10l-5 6v-6L5 9z" fill="#2490f0" />
          </svg>
        </TaskbarApp>
        <TaskbarApp name="Terminal" running>
          <svg viewBox="0 0 36 28" className="w-9 h-7">
            <rect width="36" height="28" rx="2" fill="#3c3c44" />
            <path d="M12 0h12v5H12z" fill="#9ca2a2" />
            <path d="M24 0h10q2 0 2 2v3H24z" fill="#686870" />
            <path d="M6 9l6 6-6 7" stroke="#d0d0d0" strokeWidth="3.5" fill="none" />
            <path d="M17 21h12" stroke="#fff" strokeWidth="4" />
          </svg>
        </TaskbarApp>
        <TaskbarApp name="CATIA V5">
          <span className="w-14 h-14 rounded-md bg-[#ececf0] border border-[#cfcfd4] flex items-center justify-center">
            <Earth id="earth-task" className="w-[33px] h-8" />
          </span>
          <span className="absolute bottom-[7px] w-6 h-[5px] rounded-full bg-[#0c78d0]" />
        </TaskbarApp>
      </div>
      <div className="flex items-center justify-end">
        <button type="button" aria-label="Afficher les icônes cachées" className="w-12 flex justify-center">
          <svg viewBox="0 0 18 10" className="w-[18px] h-[10px]" fill="none" stroke="#222" strokeWidth="2"><path d="M1 9l8-8 8 8" /></svg>
        </button>
        <button type="button" aria-label="Énergie" className="w-12 flex justify-center">
          <svg viewBox="0 0 24 24" className="w-6 h-6"><path d="M0 0h24v24h-6v-1H6v1H0z" fill="#0878d4" /><path d="M13 6l-3 5h3l-1 4 3-5h-3zM6 15q6 4 12 0" stroke="#fff" fill="none" strokeWidth="1.3" /></svg>
        </button>
        <button type="button" aria-label="Outils" className="w-12 flex justify-center">
          <svg viewBox="0 0 20 20" className="w-5 h-5" fill="none"><path d="M2 3l5-1 5 3q5 2 6 7l-3-2M9 7L3 18M12 7l-8 9M9 12l9-2 1 2-7 2" stroke="#3c3c3c" strokeWidth="1.8" /></svg>
        </button>
        <button type="button" aria-label="Sécurité Windows" className="w-12 flex justify-center">
          <svg viewBox="0 0 24 24" className="w-6 h-6"><path d="M1 4q7 0 11-4 4 4 11 4v8q0 8-11 12Q1 20 1 12z" fill="#1484dc" /><path d="M1 4q7 0 11-4v12H1z" fill="#48bcf0" /><circle cx="17" cy="17" r="7" fill="#20904c" /><path d="M13.5 17l2.5 3 5-5" stroke="#fff" strokeWidth="1.5" fill="none" /></svg>
        </button>
        <button type="button" aria-label="Clavier tactile" className="w-12 flex justify-center">
          <svg viewBox="0 0 24 17" className="w-6 h-[17px]" fill="none" stroke="#2a2a2a" strokeWidth="1.5"><rect x="1" y="1" width="22" height="15" rx="2" /><path d="M4 5h2M8 5h2M12 5h2M16 5h2M5 9h2M10 9h2M15 9h2M7 12h10" strokeWidth="1.8" /></svg>
        </button>
        <button type="button" className="w-[66px] text-[17px]">FRA</button>
        <button type="button" aria-label="Réseau, volume et batterie" className="flex pl-1.5">
          <span className="w-9 flex justify-center">
            <svg viewBox="0 0 24 18" className="w-6 h-[18px]" fill="none" stroke="#1c1c1c" strokeWidth="1.6"><path d="M1 7q11-11 22 0M4.5 11q7.5-8 15 0M8 14q4-4 8 0" /><circle cx="12" cy="16" r="1.5" fill="#1c1c1c" stroke="none" /></svg>
          </span>
          <span className="w-9 flex justify-center">
            <svg viewBox="0 0 24 18" className="w-6 h-[18px]" fill="none" stroke="#1c1c1c" strokeWidth="1.5"><path d="M1 6h4l5-5v16l-5-5H1zM13 6q2 3 0 6" /><path d="M16 3q4 6 0 12M19 1q6 8 0 16" stroke="#a4a4a4" /></svg>
          </span>
          <span className="w-9 flex justify-center">
            <svg viewBox="0 0 24 18" className="w-6 h-[18px] overflow-visible" fill="none" stroke="#1c1c1c" strokeWidth="1.6"><path d="M8 2h10q3 0 3 3v8q0 3-3 3H4q-3 0-3-3V9" /><path d="M4 6h10l-2 8H4zM21 6l3 2v3l-3 1z" fill="#1c1c1c" stroke="none" /><path d="M5-2L0 5h3L2 9l5-6H4z" fill="#1c1c1c" stroke="none" /></svg>
          </span>
        </button>
        <button type="button" className="w-28 text-right text-[17px] leading-6">
          13:27<br />06/11/2024
        </button>
        <button type="button" aria-label="Notifications" className="w-[65px] pl-[13px]">
          <svg viewBox="0 0 20 22" className="w-5 h-[22px]"><path d="M0 17l2-3V8q1-8 8-8t8 8v6l2 3v1H0zM6 20h8q-4 4-8 0z" fill="#14488c" /></svg>
        </button>
      </div>
    </footer>
  );
}

function Watermark() {
  return (
    <div className="pointer-events-none absolute inset-x-0 bottom-6 flex flex-col items-center text-[#9a9a9a] opacity-20 font-bold" aria-hidden="true">
      <span dir="rtl" className="text-[63px] leading-[56px] font-['DejaVu_Sans',sans-serif]">مستقل</span>
      <span className="text-[38px] leading-9 font-['Inter','Liberation_Sans',sans-serif]">mostaql.com</span>
    </div>
  );
}

export default function App() {
  return (
    <div className="relative h-screen flex flex-col overflow-hidden font-['Noto_Sans','Open_Sans',sans-serif]">
      <TitleBar />
      <MenuBar />
      <div className="flex-1 min-h-0 flex bg-[#cfcfe6]">
        <div className="flex-1 min-w-0 flex border-l-2 border-[#70707c]">
          <div className="flex-1 min-w-0 flex flex-col">
            <div className="h-1 shrink-0 bg-[#7c7c84] border-t-2 border-[#e4e4e8]" />
            <div className="flex-1 min-h-0 flex">
              <TreeScroll />
              <main className="relative flex-1 min-w-0 overflow-hidden bg-[linear-gradient(180deg,#333366_0%,#42426f_50%,#4a4a78_65%,#76769a_82%,#acacc0_100%)]">
                <SpecTree />
                <Disk />
                <Compass />
                <AxisTriad />
              </main>
            </div>
          </div>
        </div>
        <SideToolbar />
      </div>
      <BottomToolbar />
      <StatusBar />
      <Taskbar />
      <Watermark />
    </div>
  );
}
